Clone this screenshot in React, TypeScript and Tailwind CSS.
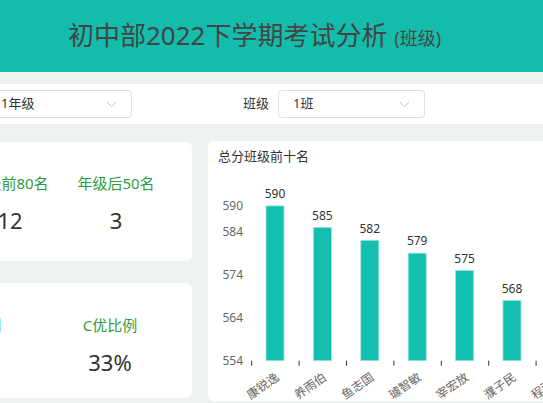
import React from 'react';

const FONT = { fontFamily: '"Noto Sans", "Noto Sans CJK SC", sans-serif' };

const top10 = [
  { name: '康锐逸', score: 590 },
  { name: '养雨伯', score: 585 },
  { name: '鱼志国', score: 582 },
  { name: '璩智敏', score: 579 },
  { name: '宰宏放', score: 575 },
  { name: '濮子民', score: 568 },
  { name: '程雨泽', score: 566 },
];

// chart is drawn in page coordinates, shifted by the svg origin
const OX = 208;
const OY = 171;
const yOf = (v: number) => 360.7 - (v - 554) * 4.3 - OY;

const Chevron = () => (
  <svg width="11" height="7" viewBox="0 0 11 7" fill="none">
    <path d="M1 1l4.5 4.5L10 1" stroke="#c0c4cc" strokeWidth="1" />
  </svg>
);

const Select = ({ value, className }: { value: string; className: string }) => (
  <div
    className={`h-[28px] w-[147px] rounded-[4px] border border-[#dcdfe6] bg-white flex items-center justify-between pl-[14px] pr-[14px] ${className}`}
  >
    <span className="text-[13px] text-[#333]">{value}</span>
    <Chevron />
  </div>
);

const Stat = ({ label, value, width }: { label: string; value: string; width: string }) => (
  <div className={`${width} flex flex-col items-center shrink-0`}>
    <span className="text-[15px] leading-[20px] text-[#2d9d3d] whitespace-nowrap">{label}</span>
    <span className="mt-[12px] text-[22px] leading-[30px] text-[#333]">{value}</span>
  </div>
);

const BarChart = () => (
  <svg width="400" height="232" className="block">
    {[554, 564, 574, 584, 590].map((v) => (
      <text key={v} x={243 - OX} y={yOf(v) + 1} textAnchor="end" dominantBaseline="middle" fontSize="12" fill="#666">
        {v}
      </text>
    ))}
    {top10.map((r, i) => {
      const bx = 266 + 47.4 * i - OX;
      const cx = bx + 9;
      const tx = 251.7 + 47.4 * i - OX;
      const ex = cx + 5;
      const ey = 379 - OY;
      return (
        <g key={r.name}>
          <rect x={bx} y={yOf(r.score)} width="18" height={yOf(554) - yOf(r.score)} fill="#13bfae" stroke="#9de3dc" strokeWidth="0.8" />
          <text x={cx} y={yOf(r.score) - 11} textAnchor="middle" dominantBaseline="middle" fontSize="12" fill="#333">
            {r.score}
          </text>
          <line x1={tx} x2={tx} y1={yOf(554)} y2={yOf(554) + 5} stroke="#333" strokeWidth="1" />
          <text x={ex} y={ey} textAnchor="end" fontSize="12" fill="#666" transform={`rotate(-35 ${ex} ${ey})`}>
            {r.name}
          </text>
        </g>
      );
    })}
  </svg>
);

export default function App() {
  return (
    <div className="w-[543px] h-[403px] overflow-hidden bg-[#edf2f0]" style={FONT}>
      <header className="h-[72px] bg-[#13bcab] flex items-center pl-[68px] pb-[2px]">
        <h1 className="text-[26px] text-[#444] whitespace-nowrap">
          初中部2022下学期考试分析 <span className="text-[18px]">(班级)</span>
        </h1>
      </header>

      <div className="mt-[12px] h-[40px] bg-white flex items-center">
        <Select value="1年级" className="-ml-[15px] pl-[15px] shrink-0" />
        <span className="ml-[111px] text-[13px] text-[#333] whitespace-nowrap">班级</span>
        <Select value="1班" className="ml-[9px] shrink-0" />
      </div>

      <div className="mt-[17px] flex gap-[16px]">
        <div className="-ml-[200px] w-[392px] shrink-0 flex flex-col gap-[22px] pt-[1px]">
          <div className="h-[119px] rounded-[6px] bg-white flex justify-end pr-[23px] pt-[31px]">
            <Stat label="年级前10名" value="2" width="w-[106px]" />
            <Stat label="年级前80名" value="12" width="w-[106px]" />
            <Stat label="年级后50名" value="3" width="w-[106px]" />
          </div>
          <div className="h-[115px] rounded-[6px] bg-white flex justify-end pr-[14px] pt-[32px]">
            <Stat label="B优比例" value="42%" width="w-[136px]" />
            <Stat label="C优比例" value="33%" width="w-[136px]" />
          </div>
        </div>

        <div className="w-[400px] h-[260px] shrink-0 rounded-[6px] bg-white">
          <div className="h-[30px] pl-[10px] pt-[5px] text-[13px] leading-[20px] text-[#333]">总分班级前十名</div>
          <BarChart />
        </div>
      </div>
    </div>
  );
}
